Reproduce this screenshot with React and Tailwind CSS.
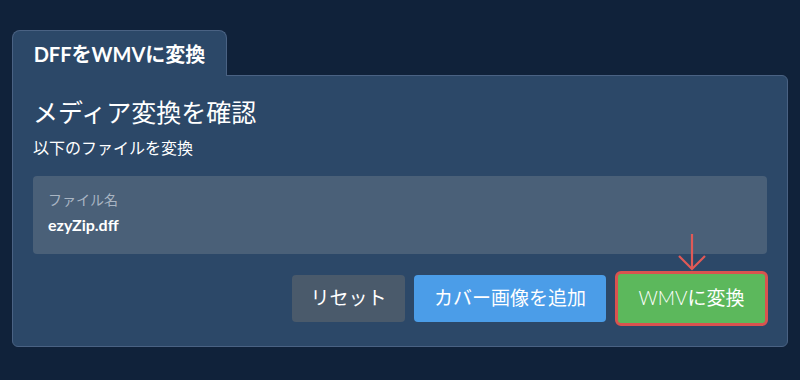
export default function App() {
  const font = { fontFamily: 'Lato, "Noto Sans CJK JP", sans-serif' };
  return (
    <div className="w-[800px] h-[380px] bg-[#10223a] pt-[30px] px-[12px] overflow-hidden" style={font}>
      <div className="relative z-10 -mb-px w-[215px] h-[46px] bg-[#2c4868] border border-b-0 border-[#4a6283] rounded-t-lg flex items-center justify-center text-white font-bold text-[20px]">
        DFFをWMVに変換
      </div>
      <div className="bg-[#2c4868] border border-[#4a6283] rounded-b-md rounded-tr-md px-[20px] pt-[20px] pb-[20px]">
        <div className="text-[25px] leading-[32px] text-white">メディア変換を確認</div>
        <div className="mt-[10px] text-[16px] leading-[20px] text-white">以下のファイルを変換</div>
        <div className="mt-[18px] h-[78px] bg-[#4a6078] rounded pl-[15px] pt-[15px]">
          <div className="text-[14px] leading-[18px] text-[#a9b5c3]">ファイル名</div>
          <div className="mt-[5px] text-[16px] leading-[22px] text-white font-bold">ezyZip.dff</div>
        </div>
        <div className="mt-[17px] flex justify-end items-center gap-[9px] -mr-px">
          <div className="w-[113px] h-[47px] rounded bg-[#4a5a6b] text-white text-[19px] flex items-center justify-center">リセット</div>
          <div className="w-[192px] h-[47px] rounded bg-[#4b9de8] text-white text-[19px] flex items-center justify-center">カバー画像を追加</div>
          <div className="relative w-[153px] h-[55px] rounded-md border-[3px] border-[#d9534f] bg-[#5cb85c] text-white text-[19px] flex items-center justify-center">
            <span><span className="font-light">WMV</span>に変換</span>
            <svg className="absolute left-1/2 -translate-x-1/2 top-[-40px]" width="28" height="38" viewBox="0 0 28 38" fill="none" stroke="#e05a57" strokeWidth="2.2">
              <path d="M14 0 V35" />
              <path d="M1 22 L14 35 L27 22" />
            </svg>
          </div>
        </div>
      </div>
    </div>
  );
}
